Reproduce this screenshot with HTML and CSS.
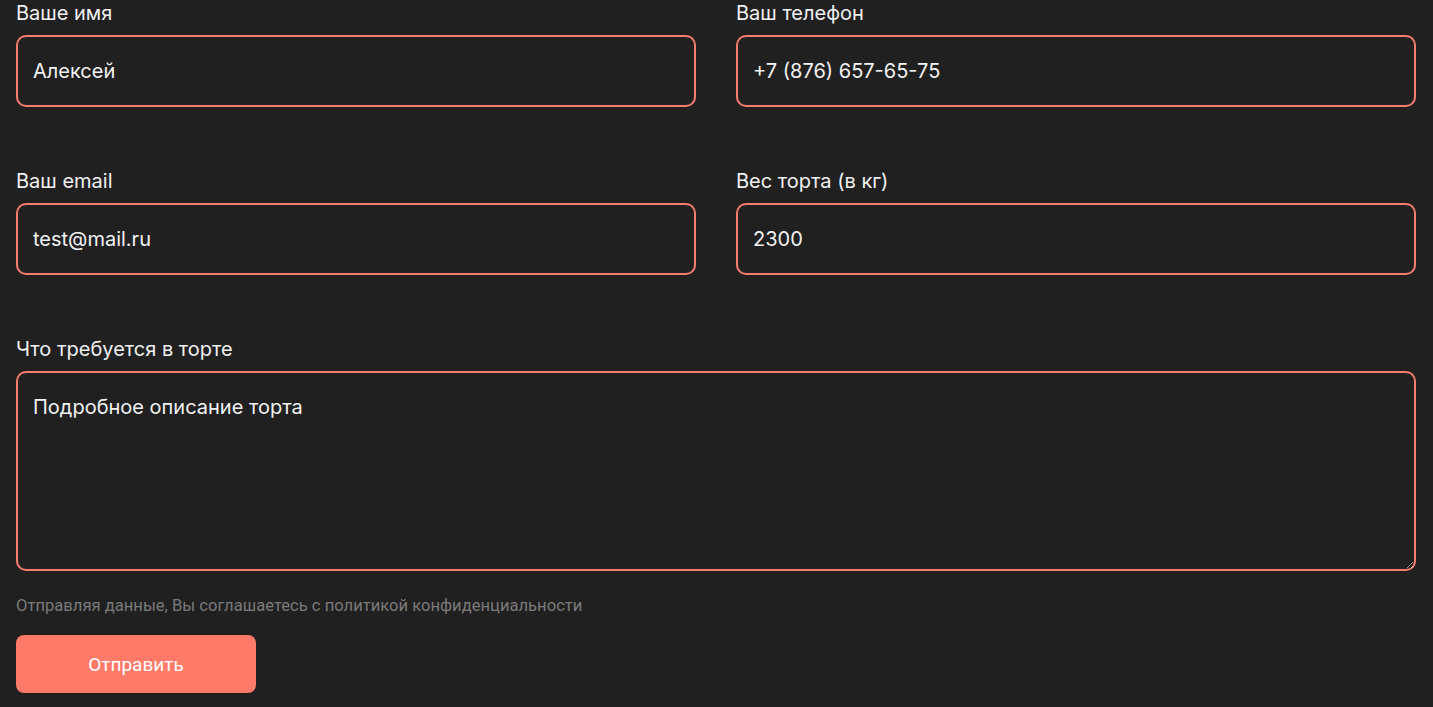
FILE: index.html
```
<!DOCTYPE html>
<html lang="ru">
<head>
<meta charset="utf-8">
<title>Заказ торта</title>
<link rel="stylesheet" href="styles.css">
</head>
<body>
<form class="form">
  <div class="grid">
    <label class="field">
      <span class="label">Ваше имя</span>
      <input class="input" type="text" value="Алексей">
    </label>
    <label class="field">
      <span class="label">Ваш телефон</span>
      <input class="input" type="text" value="+7 (876) 657-65-75">
    </label>
    <label class="field">
      <span class="label">Ваш email</span>
      <input class="input" type="text" value="test@mail.ru">
    </label>
    <label class="field">
      <span class="label">Вес торта (в кг)</span>
      <input class="input" type="text" value="2300">
    </label>
    <label class="field field-wide">
      <span class="label">Что требуется в торте</span>
      <textarea class="input textarea">Подробное описание торта</textarea>
    </label>
  </div>
  <p class="note">Отправляя данные, Вы соглашаетесь с политикой конфиденциальности</p>
  <button class="button" type="button">Отправить</button>
</form>
</body>
</html>
```
FILE: styles.css
```
* { box-sizing: border-box; }
html, body { margin: 0; background: #202020; }
body {
  font-family: Inter, "Noto Sans", sans-serif;
  color: #f2f2f2;
  height: 707px;
  overflow: hidden;
}
.form {
  width: 1400px;
  margin-left: 16px;
  padding-top: 1px;
}
.grid {
  display: grid;
  grid-template-columns: 680px 680px;
  column-gap: 40px;
  row-gap: 62px;
}
.field {
  display: flex;
  flex-direction: column;
  gap: 10px;
}
.field-wide { grid-column: 1 / -1; }
.label {
  font-size: 20px;
  line-height: 24px;
  color: #f0f0f0;
}
.input {
  display: block;
  width: 100%;
  height: 72px;
  background: #202020;
  border: 2px solid #f57d6c;
  border-radius: 10px;
  padding: 0 15px;
  font-family: inherit;
  font-size: 20px;
  color: #f2f2f2;
  outline: none;
}
.textarea {
  height: 200px;
  padding: 22px 15px;
  line-height: 24px;
  resize: vertical;
}
.note {
  margin: 24px 0 0;
  font-family: Roboto, "Noto Sans", sans-serif;
  font-size: 16.6px;
  line-height: 21px;
  color: #7a7a7a;
}
.button {
  display: block;
  margin-top: 19px;
  width: 240px;
  height: 58px;
  border: none;
  border-radius: 8px;
  background: #ff7b69;
  color: #ffffff;
  font-family: Roboto, "Noto Sans", sans-serif;
  font-size: 19px;
  font-weight: 400;
  cursor: pointer;
}
```
